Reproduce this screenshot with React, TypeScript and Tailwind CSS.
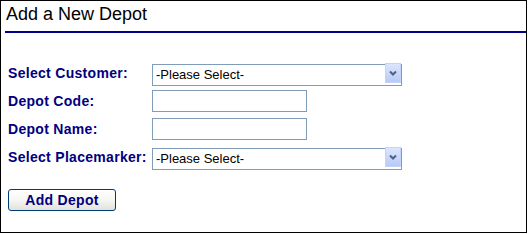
export default function App() {
  return (
    <div className="w-[527px] h-[233px] border border-black bg-white font-['Liberation_Sans',Arial,sans-serif]">
      <div className="pl-[4px]">
        <h1 className="h-[30px] pl-[1px] pt-[3px] text-[18px] leading-[21px] text-black">Add a New Depot</h1>
        <div className="h-[2px] bg-[#00008b]" />
      </div>

      <form className="pl-[7px] pt-[29px]" onSubmit={(e) => e.preventDefault()}>
        <div className="grid grid-cols-[144px_auto] gap-y-[6px] items-center">
          <label className="text-[14px] font-bold tracking-[0.3px] text-[#000080]">Select Customer:</label>
          <SelectBox />

          <label className="text-[14px] font-bold tracking-[0.3px] text-[#000080]">Depot Code:</label>
          <input type="text" className="w-[155px] h-[22px] border border-[#7f9db9] bg-white outline-none text-[13px] px-[3px]" />

          <label className="text-[14px] font-bold tracking-[0.3px] text-[#000080]">Depot Name:</label>
          <input type="text" className="w-[155px] h-[22px] border border-[#7f9db9] bg-white outline-none text-[13px] px-[3px]" />

          <label className="text-[14px] font-bold tracking-[0.3px] text-[#000080]">Select Placemarker:</label>
          <SelectBox />
        </div>

        <button
          type="submit"
          className="mt-[21px] w-[108px] h-[22px] rounded-[3px] border border-[#003c74] bg-gradient-to-b from-white via-[#f6f6f3] to-[#e2e2da] text-[14px] font-bold tracking-[0.3px] text-[#000080] leading-none"
        >
          Add Depot
        </button>
      </form>
    </div>
  );
}

function SelectBox() {
  return (
    <div className="relative w-[250px] h-[22px]">
      <select className="appearance-none w-full h-full border border-[#7f9db9] bg-white pl-[3px] text-[13px] text-black outline-none">
        <option>-Please Select-</option>
      </select>
      <div className="pointer-events-none absolute right-[1px] top-[1px] bottom-[1px] w-[16px] flex items-center justify-center border border-[#c3d3fd] bg-gradient-to-b from-[#dce6fe] to-[#b7c9f6]">
        <svg width="8" height="6" viewBox="0 0 8 6">
          <path d="M1 1.5 L4 4.5 L7 1.5" fill="none" stroke="#4d6185" strokeWidth="2" />
        </svg>
      </div>
    </div>
  );
}
